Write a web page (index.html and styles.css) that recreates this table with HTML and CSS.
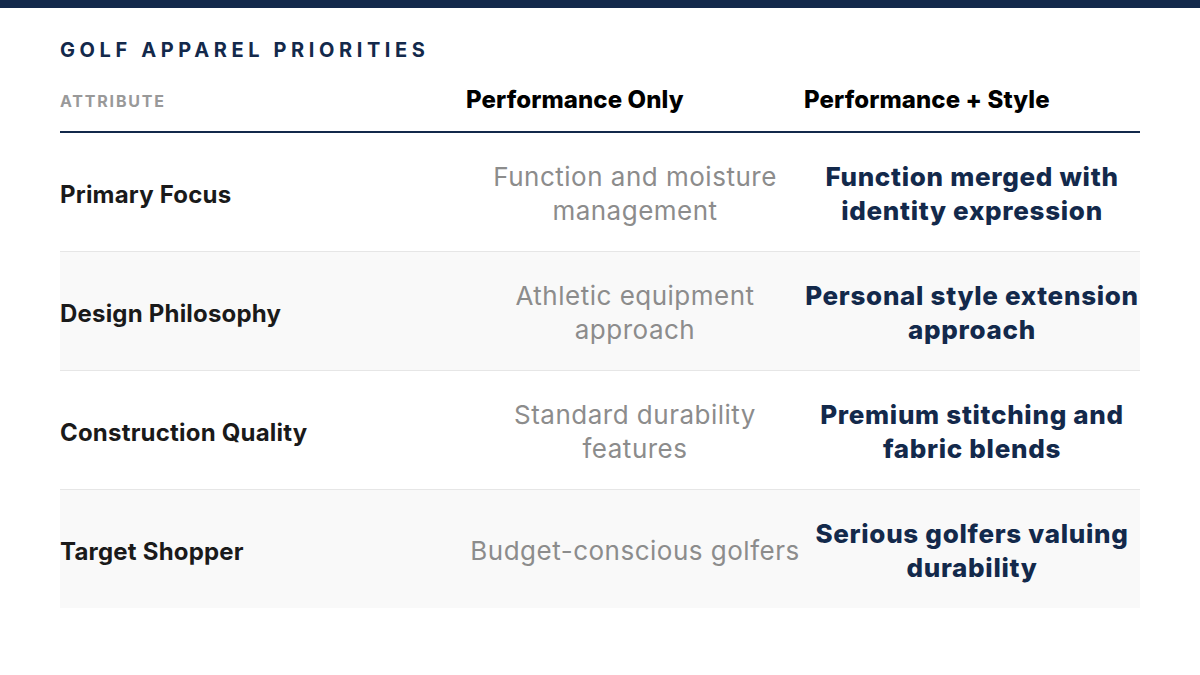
FILE: index.html
```html
<!DOCTYPE html>
<html>
<head>
<meta charset="utf-8">
<link rel="stylesheet" href="styles.css">
</head>
<body>
<div class="topbar"></div>
<main class="wrap">
  <h1 class="title">GOLF APPAREL PRIORITIES</h1>
  <div class="table">
    <div class="row head">
      <div class="c1 attr">ATTRIBUTE</div>
      <div class="c2 hcol">Performance Only</div>
      <div class="c3 hcol">Performance + Style</div>
    </div>
    <div class="row">
      <div class="c1 label">Primary Focus</div>
      <div class="c2 muted">Function and moisture management</div>
      <div class="c3 strong">Function merged with identity expression</div>
    </div>
    <div class="row alt">
      <div class="c1 label">Design Philosophy</div>
      <div class="c2 muted">Athletic equipment approach</div>
      <div class="c3 strong">Personal style extension approach</div>
    </div>
    <div class="row">
      <div class="c1 label">Construction Quality</div>
      <div class="c2 muted">Standard durability features</div>
      <div class="c3 strong">Premium stitching and fabric blends</div>
    </div>
    <div class="row alt last">
      <div class="c1 label">Target Shopper</div>
      <div class="c2 muted">Budget-conscious golfers</div>
      <div class="c3 strong">Serious golfers valuing durability</div>
    </div>
  </div>
</main>
</body>
</html>
```
FILE: styles.css
```css
* { box-sizing: border-box; }
html, body { margin: 0; padding: 0; background: #fff; }
body { font-family: Inter, "Noto Sans", sans-serif; color: #1a1a1a; }
.topbar { height: 8px; background: #13294b; }
.wrap { padding: 28px 60px 0 60px; }
.title {
  margin: 0;
  font-size: 20px;
  font-weight: 700;
  letter-spacing: 4.6px;
  color: #13294b;
  line-height: 28px;
}
.table { margin-top: 12px; }
.row {
  display: grid;
  grid-template-columns: 406px 338px 336px;
  align-items: center;
  min-height: 119px;
  border-bottom: 1px solid #e6e6e6;
  padding-top: 4px;
}
.row.alt { background: #f9f9f9; }
.row.last { border-bottom: none; min-height: 118px; }
.row.head {
  min-height: 0;
  height: 57px;
  border-bottom: 2px solid #13294b;
  padding-top: 0;
  padding-bottom: 9px;
}
.attr {
  font-size: 16px;
  font-weight: 700;
  letter-spacing: 1.8px;
  color: #999;
  padding-top: 3px;
}
.hcol {
  font-size: 24px;
  font-weight: 800;
  letter-spacing: 0.1px;
  color: #000;
}
.label {
  font-size: 24px;
  font-weight: 700;
  letter-spacing: 0.2px;
  color: #1a1a1a;
}
.muted {
  text-align: center;
  font-size: 26px;
  line-height: 34px;
  color: #8c8c8c;
  letter-spacing: 0.5px;
}
.strong {
  text-align: center;
  font-size: 26px;
  line-height: 34px;
  font-weight: 800;
  color: #13294b;
  letter-spacing: 0.7px;
}
```
